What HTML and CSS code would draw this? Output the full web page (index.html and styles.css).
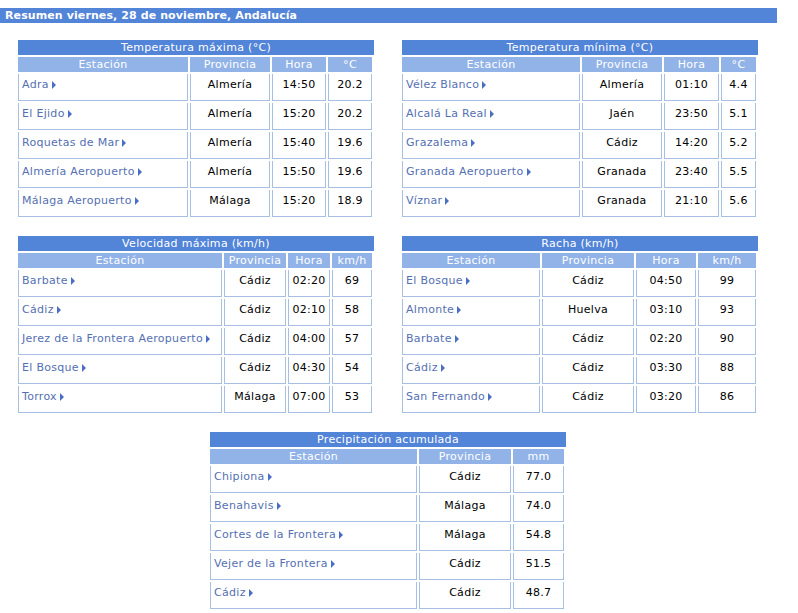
FILE: index.html
```html
<!DOCTYPE html>
<html lang="es">
<head>
<meta charset="utf-8">
<title>Resumen Andalucía</title>
<link rel="stylesheet" href="styles.css">
</head>
<body>
<div class="topbar">Resumen viernes, 28 de noviembre, Andalucía</div>

<div class="pair">
  <div class="block">
    <div class="title">Temperatura máxima (°C)</div>
    <table class="grid">
      <tr><th class="w170">Estación</th><th class="w80">Provincia</th><th class="w54">Hora</th><th class="w44">°C</th></tr>
      <tr><td class="st"><a>Adra</a></td><td>Almería</td><td>14:50</td><td>20.2</td></tr>
      <tr><td class="st"><a>El Ejido</a></td><td>Almería</td><td>15:20</td><td>20.2</td></tr>
      <tr><td class="st"><a>Roquetas de Mar</a></td><td>Almería</td><td>15:40</td><td>19.6</td></tr>
      <tr><td class="st"><a>Almería Aeropuerto</a></td><td>Almería</td><td>15:50</td><td>19.6</td></tr>
      <tr><td class="st"><a>Málaga Aeropuerto</a></td><td>Málaga</td><td>15:20</td><td>18.9</td></tr>
    </table>
  </div>
  <div class="block">
    <div class="title">Temperatura mínima (°C)</div>
    <table class="grid">
      <tr><th class="w178">Estación</th><th class="w80">Provincia</th><th class="w55">Hora</th><th class="w35">°C</th></tr>
      <tr><td class="st"><a>Vélez Blanco</a></td><td>Almería</td><td>01:10</td><td>4.4</td></tr>
      <tr><td class="st"><a>Alcalá La Real</a></td><td>Jaén</td><td>23:50</td><td>5.1</td></tr>
      <tr><td class="st"><a>Grazalema</a></td><td>Cádiz</td><td>14:20</td><td>5.2</td></tr>
      <tr><td class="st"><a>Granada Aeropuerto</a></td><td>Granada</td><td>23:40</td><td>5.5</td></tr>
      <tr><td class="st"><a>Víznar</a></td><td>Granada</td><td>21:10</td><td>5.6</td></tr>
    </table>
  </div>
</div>

<div class="pair">
  <div class="block">
    <div class="title">Velocidad máxima (km/h)</div>
    <table class="grid">
      <tr><th class="w204">Estación</th><th class="w62">Provincia</th><th class="w42">Hora</th><th class="w40">km/h</th></tr>
      <tr><td class="st"><a>Barbate</a></td><td>Cádiz</td><td>02:20</td><td>69</td></tr>
      <tr><td class="st"><a>Cádiz</a></td><td>Cádiz</td><td>02:10</td><td>58</td></tr>
      <tr><td class="st"><a>Jerez de la Frontera Aeropuerto</a></td><td>Cádiz</td><td>04:00</td><td>57</td></tr>
      <tr><td class="st"><a>El Bosque</a></td><td>Cádiz</td><td>04:30</td><td>54</td></tr>
      <tr><td class="st"><a>Torrox</a></td><td>Málaga</td><td>07:00</td><td>53</td></tr>
    </table>
  </div>
  <div class="block">
    <div class="title">Racha (km/h)</div>
    <table class="grid">
      <tr><th class="w138">Estación</th><th class="w92">Provincia</th><th class="w60">Hora</th><th class="w58">km/h</th></tr>
      <tr><td class="st"><a>El Bosque</a></td><td>Cádiz</td><td>04:50</td><td>99</td></tr>
      <tr><td class="st"><a>Almonte</a></td><td>Huelva</td><td>03:10</td><td>93</td></tr>
      <tr><td class="st"><a>Barbate</a></td><td>Cádiz</td><td>02:20</td><td>90</td></tr>
      <tr><td class="st"><a>Cádiz</a></td><td>Cádiz</td><td>03:30</td><td>88</td></tr>
      <tr><td class="st"><a>San Fernando</a></td><td>Cádiz</td><td>03:20</td><td>86</td></tr>
    </table>
  </div>
</div>

<div class="single">
  <div class="block">
    <div class="title">Precipitación acumulada</div>
    <table class="grid">
      <tr><th class="w207">Estación</th><th class="w92">Provincia</th><th class="w51">mm</th></tr>
      <tr><td class="st"><a>Chipiona</a></td><td>Cádiz</td><td>77.0</td></tr>
      <tr><td class="st"><a>Benahavis</a></td><td>Málaga</td><td>74.0</td></tr>
      <tr><td class="st"><a>Cortes de la Frontera</a></td><td>Málaga</td><td>54.8</td></tr>
      <tr><td class="st"><a>Vejer de la Frontera</a></td><td>Cádiz</td><td>51.5</td></tr>
      <tr><td class="st"><a>Cádiz</a></td><td>Cádiz</td><td>48.7</td></tr>
    </table>
  </div>
</div>
</body>
</html>
```

FILE: styles.css
```css
html, body {
  background: #ffffff;
}
body {
  margin: 8px 0 0 0;
  font-family: "DejaVu Sans", Verdana, sans-serif;
  font-size: 11px;
  letter-spacing: 0.3px;
  color: #000000;
}
.topbar {
  width: 777px;
  height: 15px;
  box-sizing: border-box;
  background: #5284d8;
  color: #ffffff;
  font-weight: bold;
  font-size: 11px;
  letter-spacing: 0.1px;
  line-height: 15px;
  padding-left: 5px;
  white-space: nowrap;
}
.pair {
  display: flex;
  gap: 28px;
  padding-left: 18px;
  margin-top: 17px;
}
.single {
  display: flex;
  justify-content: center;
  width: 776px;
  margin-top: 17px;
}
.block {
  width: 356px;
}
.title {
  height: 15px;
  line-height: 15px;
  background: #5284d8;
  color: #ffffff;
  text-align: center;
  white-space: nowrap;
}
.grid {
  border-collapse: separate;
  border-spacing: 2px;
  margin-left: -2px;
  table-layout: fixed;
}
.grid th {
  height: 15px;
  padding: 0;
  line-height: 15px;
  background: #92b3e8;
  color: #ffffff;
  font-weight: normal;
  text-align: center;
  white-space: nowrap;
  overflow: hidden;
}
.grid td {
  box-sizing: border-box;
  height: 27px;
  padding: 4px 3px 9px 3px;
  line-height: 13px;
  vertical-align: top;
  text-align: center;
  border: 1px solid #a7bfe3;
  border-top: none;
  white-space: nowrap;
}
.grid td.st {
  text-align: left;
}
.grid td.st a {
  color: #5570b2;
  text-decoration: none;
}
.grid td.st a::after {
  content: "";
  display: inline-block;
  width: 0;
  height: 0;
  margin-left: 3px;
  border-left: 4px solid #4a6ec4;
  border-top: 4px solid transparent;
  border-bottom: 4px solid transparent;
  vertical-align: -1px;
}
.w35 { width: 35px; }
.w40 { width: 40px; }
.w42 { width: 42px; }
.w44 { width: 44px; }
.w51 { width: 51px; }
.w54 { width: 54px; }
.w55 { width: 55px; }
.w58 { width: 58px; }
.w60 { width: 60px; }
.w62 { width: 62px; }
.w80 { width: 80px; }
.w92 { width: 92px; }
.w138 { width: 138px; }
.w170 { width: 170px; }
.w178 { width: 178px; }
.w204 { width: 204px; }
.w207 { width: 207px; }
```
